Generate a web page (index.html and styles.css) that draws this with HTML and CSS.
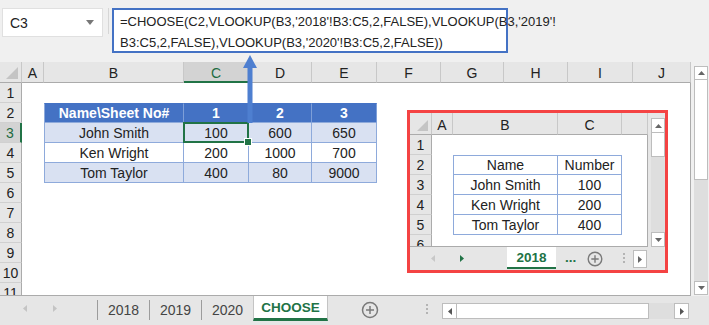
FILE: index.html
```html
<!DOCTYPE html>
<html lang="en">
<head>
  <meta charset="UTF-8" />
  <title>CHOOSE + VLOOKUP across sheets</title>
  <link rel="stylesheet" href="styles.css">
</head>
<body>
<div class="app">

  <div class="fbar">
    <div class="namebox">
      <span>C3</span>
      <svg class="caret" width="8" height="5" viewBox="0 0 8 5"><polygon points="0,0 8,0 4,5" fill="#777"/></svg>
    </div>
    <div class="fsep"></div>
    <div class="formula">=CHOOSE(C2,VLOOKUP(B3,'2018'!B3:C5,2,FALSE),VLOOKUP(B3,'2019'!<br>B3:C5,2,FALSE),VLOOKUP(B3,'2020'!B3:C5,2,FALSE))</div>
  </div>

  <div class="sheet">
    <div class="grid">
      <div class="row hdr">
        <div class="corner w-rh"><svg width="12" height="12" viewBox="0 0 12 12"><polygon points="12,0 12,12 0,12" fill="#c4c4c4"/></svg></div>
        <div class="ch w-a">A</div>
        <div class="ch w-b">B</div>
        <div class="ch w-c on">C</div>
        <div class="ch w-d">D</div>
        <div class="ch w-e">E</div>
        <div class="ch w-f">F</div>
        <div class="ch w-g">G</div>
        <div class="ch w-h">H</div>
        <div class="ch w-i">I</div>
        <div class="ch w-j">J</div>
      </div>
      <div class="body">
        <div class="row"><div class="rh w-rh">1</div></div>
        <div class="row">
          <div class="rh w-rh">2</div>
          <div class="cell w-a"></div>
          <div class="t th first w-b">Name\Sheet No#</div>
          <div class="t th w-c">1</div>
          <div class="t th w-d">2</div>
          <div class="t th w-e">3</div>
        </div>
        <div class="row">
          <div class="rh w-rh on">3</div>
          <div class="cell w-a"></div>
          <div class="t band first w-b">John Smith</div>
          <div class="t band w-c sel">100</div>
          <div class="t band w-d">600</div>
          <div class="t band w-e">650</div>
        </div>
        <div class="row">
          <div class="rh w-rh">4</div>
          <div class="cell w-a"></div>
          <div class="t first w-b">Ken Wright</div>
          <div class="t w-c">200</div>
          <div class="t w-d">1000</div>
          <div class="t w-e">700</div>
        </div>
        <div class="row">
          <div class="rh w-rh">5</div>
          <div class="cell w-a"></div>
          <div class="t band first w-b">Tom Taylor</div>
          <div class="t band w-c">400</div>
          <div class="t band w-d">80</div>
          <div class="t band w-e">9000</div>
        </div>
        <div class="row"><div class="rh w-rh">6</div></div>
        <div class="row"><div class="rh w-rh">7</div></div>
        <div class="row"><div class="rh w-rh">8</div></div>
        <div class="row"><div class="rh w-rh">9</div></div>
        <div class="row"><div class="rh w-rh">10</div></div>
        <div class="row"><div class="rh w-rh">11</div></div>
      </div>
    </div>

    <div class="vscroll">
      <div class="sbtn"><svg width="7" height="4" viewBox="0 0 7 4"><polygon points="0,4 7,4 3.5,0" fill="#666"/></svg></div>
      <div class="vthumb"></div>
      <div class="vtrack"></div>
      <div class="sbtn"><svg width="7" height="4" viewBox="0 0 7 4"><polygon points="0,0 7,0 3.5,4" fill="#666"/></svg></div>
    </div>
  </div>

  <div class="tabbar">
    <div class="tabnav">
      <svg width="4" height="7" viewBox="0 0 4 7"><polygon points="4,0 4,7 0,3.5" fill="#c4c4c4"/></svg>
      <svg width="4" height="7" viewBox="0 0 4 7"><polygon points="0,0 0,7 4,3.5" fill="#c4c4c4"/></svg>
    </div>
    <div class="tab">2018</div>
    <div class="tab">2019</div>
    <div class="tab">2020</div>
    <div class="tab active">CHOOSE</div>
    <svg class="addsheet" width="18" height="18" viewBox="0 0 18 18"><circle cx="9" cy="9" r="7.5" fill="none" stroke="#7a7a7a" stroke-width="1.5"/><path d="M9 5v8M5 9h8" stroke="#7a7a7a" stroke-width="1.5"/></svg>
    <div class="dots"></div>
    <div class="hscroll">
      <div class="hbtn"><svg width="4" height="7" viewBox="0 0 4 7"><polygon points="4,0 4,7 0,3.5" fill="#555"/></svg></div>
      <div class="hthumb"></div>
      <div class="htrack"></div>
      <div class="hbtn"><svg width="4" height="7" viewBox="0 0 4 7"><polygon points="0,0 0,7 4,3.5" fill="#555"/></svg></div>
    </div>
  </div>

  <!-- arrow from the formula to the active cell -->
  <svg class="arrow" width="16" height="70" viewBox="0 0 16 70">
    <polygon points="8,0 15,13 1,13" fill="#4e7fd0"/>
    <rect x="5.5" y="12" width="5" height="56" fill="#4e7fd0"/>
  </svg>

  <!-- picture of sheet 2018 -->
  <div class="pic">
    <div class="mini">
      <div class="mgrid">
        <div class="mrow mhdr">
          <div class="corner m-rh"><svg width="11" height="11" viewBox="0 0 11 11"><polygon points="11,0 11,11 0,11" fill="#c4c4c4"/></svg></div>
          <div class="ch m-a">A</div>
          <div class="ch m-b">B</div>
          <div class="ch m-c">C</div>
          <div class="ch m-x"></div>
        </div>
        <div class="mbody">
          <div class="mrow"><div class="rh m-rh">1</div></div>
          <div class="mrow">
            <div class="rh m-rh">2</div>
            <div class="cell m-a"></div>
            <div class="mt first top m-b">Name</div>
            <div class="mt top m-c">Number</div>
          </div>
          <div class="mrow">
            <div class="rh m-rh">3</div>
            <div class="cell m-a"></div>
            <div class="mt first m-b">John Smith</div>
            <div class="mt m-c">100</div>
          </div>
          <div class="mrow">
            <div class="rh m-rh">4</div>
            <div class="cell m-a"></div>
            <div class="mt first m-b">Ken Wright</div>
            <div class="mt m-c">200</div>
          </div>
          <div class="mrow">
            <div class="rh m-rh">5</div>
            <div class="cell m-a"></div>
            <div class="mt first m-b">Tom Taylor</div>
            <div class="mt m-c">400</div>
          </div>
          <div class="mrow"><div class="rh m-rh">6</div></div>
        </div>
      </div>
      <div class="mvscroll">
        <div class="msbtn"><svg width="7" height="4" viewBox="0 0 7 4"><polygon points="0,4 7,4 3.5,0" fill="#666"/></svg></div>
        <div class="mvthumb"></div>
        <div class="mvtrack"></div>
        <div class="msbtn"><svg width="7" height="4" viewBox="0 0 7 4"><polygon points="0,0 7,0 3.5,4" fill="#666"/></svg></div>
      </div>
    </div>
    <div class="mtabs">
      <div class="mnav">
        <svg width="4" height="7" viewBox="0 0 4 7"><polygon points="4,0 4,7 0,3.5" fill="#c8c8c8"/></svg>
        <svg width="4" height="7" viewBox="0 0 4 7"><polygon points="0,0 0,7 4,3.5" fill="#217346"/></svg>
      </div>
      <div class="mtab">2018</div>
      <div class="more">...</div>
      <svg class="madd" width="16" height="16" viewBox="0 0 16 16"><circle cx="8" cy="8" r="6.8" fill="none" stroke="#7a7a7a" stroke-width="1.4"/><path d="M8 4.3v7.4M4.3 8h7.4" stroke="#7a7a7a" stroke-width="1.4"/></svg>
      <div class="mdots"></div>
      <div class="mright"><svg width="4" height="7" viewBox="0 0 4 7"><polygon points="0,0 0,7 4,3.5" fill="#666"/></svg></div>
    </div>
  </div>

</div>
</body>
</html>
```

FILE: styles.css
```css
* {
  box-sizing: border-box;
}

body {
  margin: 0;
  background: #f0f0f0;
  font-family: 'Liberation Sans', Arial, sans-serif;
  font-size: 13.5px;
  color: #222;
}

.app {
  position: relative;
  width: 709px;
  height: 325px;
  overflow: hidden;
}

/* formula bar */
.fbar {
  display: flex;
  align-items: flex-start;
  height: 62px;
  padding: 8px 0 0 2px;
}

.namebox {
  display: flex;
  align-items: center;
  justify-content: space-between;
  width: 101px;
  height: 29px;
  padding: 0 8px 0 7px;
  background: #fff;
  border: 1px solid #e0e0e0;
  font-size: 14px;
}

.fsep {
  width: 1px;
  height: 26px;
  margin: 0 3px 0 5px;
  background: #d6d6d6;
}

.formula {
  width: 396px;
  height: 45px;
  padding: 1px 0 0 6px;
  background: #fff;
  border: 2px solid #4472c4;
  font-family: 'Liberation Sans Narrow', 'Liberation Sans', sans-serif;
  font-size: 13px;
  line-height: 21px;
  white-space: nowrap;
}

/* sheet */
.sheet {
  display: flex;
  align-items: flex-start;
}

.grid {
  width: 691px;
}

.row {
  display: flex;
  height: 20px;
}

.hdr {
  height: 21px;
}

.w-rh { width: 22px; }
.w-a { width: 22px; }
.w-b { width: 140px; }
.w-c { width: 65px; }
.w-d { width: 63px; }
.w-e { width: 65px; }
.w-f { width: 64px; }
.w-g { width: 63px; }
.w-h { width: 64px; }
.w-i { width: 65px; }
.w-j { flex: 1; }

.corner {
  display: flex;
  align-items: flex-end;
  justify-content: flex-end;
  padding: 0 3px 3px 0;
  background: #e6e6e6;
  border-right: 1px solid #c8c8c8;
  border-bottom: 1px solid #ababab;
}

.ch {
  display: flex;
  align-items: center;
  justify-content: center;
  padding-top: 2px;
  background: #e6e6e6;
  border-right: 1px solid #c8c8c8;
  border-bottom: 1px solid #ababab;
  font-size: 14px;
}

.ch.on {
  background: #d3d3d3;
  color: #1e6b41;
  border-bottom: 2px solid #217346;
}

.body {
  height: 213px;
  overflow: hidden;
  background: #fff;
  border-right: 1px solid #ababab;
  border-bottom: 1px solid #ababab;
}

.rh {
  display: flex;
  align-items: center;
  justify-content: center;
  background: #e6e6e6;
  border-right: 1px solid #ababab;
  border-bottom: 1px solid #d0d0d0;
  font-size: 14px;
  flex-shrink: 0;
}

.rh.on {
  background: #d3d3d3;
  color: #1e6b41;
  border-right: 2px solid #217346;
}

.t {
  display: flex;
  align-items: center;
  justify-content: center;
  border-right: 1px solid #8eaadb;
  border-bottom: 1px solid #8eaadb;
  font-size: 14px;
}

.t.first {
  border-left: 1px solid #8eaadb;
}

.th {
  background: #4472c4;
  color: #fff;
  font-weight: bold;
  border-top: 1px solid #4472c4;
  border-right-color: #7e9fd8;
}

.band {
  background: #d9e1f2;
}

.sel {
  position: relative;
}

.sel::after {
  content: '';
  position: absolute;
  left: -1px;
  top: -1px;
  right: -1px;
  bottom: -1px;
  border: 2px solid #217346;
}

.sel::before {
  content: '';
  position: absolute;
  right: -4px;
  bottom: -4px;
  width: 6px;
  height: 6px;
  background: #217346;
  border: 1px solid #fff;
  z-index: 1;
}

/* vertical scrollbar */
.vscroll {
  display: flex;
  flex-direction: column;
  width: 14px;
  height: 229px;
  margin: 4px 0 0 3px;
  background: #dedede;
}

.sbtn {
  display: flex;
  align-items: center;
  justify-content: center;
  height: 14px;
  background: #fff;
  border: 1px solid #bdbdbd;
}

.vthumb {
  height: 100px;
  background: #fff;
  border: 1px solid #bdbdbd;
  border-top: none;
}

.vtrack {
  flex: 1;
}

/* sheet tabs */
.tabbar {
  display: flex;
  align-items: flex-start;
  height: 29px;
  background: #e6e6e6;
}

.tabnav {
  display: flex;
  align-items: center;
  gap: 26px;
  width: 97px;
  height: 25px;
  padding-left: 23px;
}

.tab {
  display: flex;
  align-items: center;
  justify-content: center;
  width: 52px;
  height: 20px;
  margin-top: 4px;
  border-left: 1px solid #9c9c9c;
  color: #444;
  font-size: 14px;
}

.tab.active {
  width: 75px;
  height: 25px;
  margin-top: 0;
  padding-top: 1px;
  background: #fff;
  border-left: 1px solid #c4c4c4;
  border-right: 1px solid #c4c4c4;
  border-bottom: 3px solid #217346;
  color: #217346;
  font-weight: bold;
  font-size: 13.5px;
}

.addsheet {
  margin: 5px 0 0 33px;
}

.dots {
  width: 2px;
  height: 12px;
  margin: 8px 0 0 47px;
  background: repeating-linear-gradient(#b4b4b4 0 2px, transparent 2px 4px);
}

.hscroll {
  display: flex;
  width: 247px;
  height: 16px;
  margin: 7px 0 0 14px;
  background: #dedede;
}

.hbtn {
  display: flex;
  align-items: center;
  justify-content: center;
  width: 15px;
  background: #fff;
  border: 1px solid #bdbdbd;
}

.hthumb {
  width: 192px;
  background: #fff;
  border: 1px solid #bdbdbd;
  border-left: none;
}

.htrack {
  flex: 1;
}

/* arrow */
.arrow {
  position: absolute;
  left: 242px;
  top: 55px;
  z-index: 2;
}

/* embedded picture */
.pic {
  position: absolute;
  left: 407px;
  top: 110px;
  width: 261px;
  height: 163px;
  border: 3px solid #f44343;
  background: #e6e6e6;
}

.mini {
  display: flex;
  align-items: flex-start;
  height: 134px;
}

.mgrid {
  width: 239px;
}

.mrow {
  display: flex;
  height: 20px;
}

.mhdr {
  height: 22px;
}

.m-rh { width: 22px; }
.m-a { width: 21px; }
.m-b { width: 105px; }
.m-c { width: 64px; }
.m-x { flex: 1; }

.mbody {
  height: 112px;
  overflow: hidden;
  background: #fff;
  border-right: 1px solid #ababab;
  border-bottom: 1px solid #ababab;
}

.mt {
  display: flex;
  align-items: center;
  justify-content: center;
  border-right: 1px solid #8eaadb;
  border-bottom: 1px solid #8eaadb;
  font-size: 14px;
}

.mt.first {
  border-left: 1px solid #8eaadb;
}

.mt.top {
  border-top: 1px solid #8eaadb;
}

.mvscroll {
  display: flex;
  flex-direction: column;
  width: 14px;
  height: 129px;
  margin: 5px 0 0 3px;
  background: #dedede;
}

.msbtn {
  display: flex;
  align-items: center;
  justify-content: center;
  height: 15px;
  background: #fff;
  border: 1px solid #bdbdbd;
}

.mvthumb {
  height: 24px;
  background: #fff;
  border: 1px solid #bdbdbd;
  border-top: none;
}

.mvtrack {
  flex: 1;
}

.mtabs {
  display: flex;
  align-items: flex-start;
  height: 23px;
}

.mnav {
  display: flex;
  align-items: center;
  gap: 25px;
  width: 97px;
  height: 22px;
  padding-left: 21px;
}

.mtab {
  display: flex;
  align-items: center;
  justify-content: center;
  width: 49px;
  height: 22px;
  background: #fff;
  border-bottom: 2px solid #217346;
  color: #217346;
  font-weight: bold;
  font-size: 13.5px;
}

.more {
  margin: 3px 0 0 9px;
  color: #217346;
  font-weight: bold;
  font-size: 13.5px;
}

.madd {
  margin: 4px 0 0 11px;
}

.mdots {
  width: 2px;
  height: 12px;
  margin: 6px 0 0 20px;
  background: repeating-linear-gradient(#b4b4b4 0 2px, transparent 2px 4px);
}

.mright {
  display: flex;
  align-items: center;
  justify-content: center;
  width: 14px;
  height: 18px;
  margin: 3px 0 0 8px;
  background: #fff;
  border: 1px solid #bdbdbd;
}
```
